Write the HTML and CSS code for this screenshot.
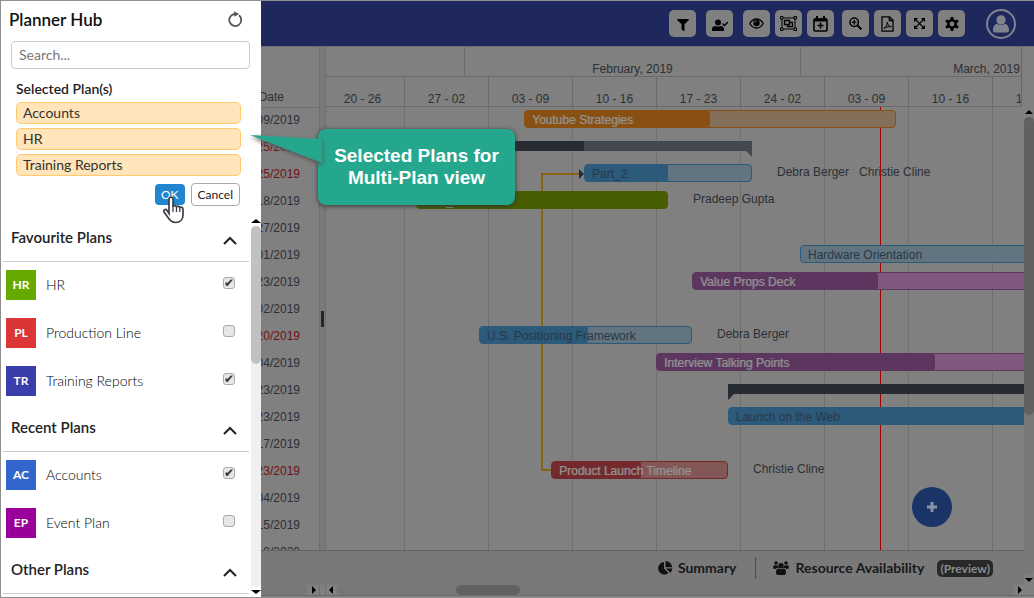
FILE: index.html
```html
<!DOCTYPE html>
<html lang="en">
<head>
<meta charset="utf-8">
<title>Planner Hub</title>
<link rel="stylesheet" href="styles.css">
</head>
<body>
<div class="app">
  <aside class="hub">
    <header class="hub-head">
      <h1 class="hub-title">Planner Hub</h1>
      <button class="icon-btn" type="button" aria-label="Refresh">
        <svg width="16" height="16" viewBox="0 0 16 16" fill="none" stroke="#555" stroke-width="1.800"><path d="M12 4.300A6 6 0 1 1 8.500 3"/><path d="M7 .2 12 3 7.500 5.800z" fill="#555" stroke="none"/></svg>
      </button>
    </header>
    <input class="search" type="search" placeholder="Search..." aria-label="Search plans">
    <section class="selected">
      <h2 class="selected-title">Selected Plan(s)</h2>
      <ul class="chips">
        <li class="chip">Accounts</li>
        <li class="chip">HR</li>
        <li class="chip">Training Reports</li>
      </ul>
      <div class="actions">
        <button class="btn btn-ok" type="button">OK</button>
        <button class="btn btn-cancel" type="button">Cancel</button>
      </div>
    </section>
    <div class="plans-wrap">
      <div class="plans">
        <section>
          <h2 class="group">Favourite Plans <svg width="14" height="9" viewBox="0 0 14 9" fill="none" stroke="#222" stroke-width="2"><path d="M1 8 7 2l6 6"/></svg></h2>
          <label class="plan"><span class="tile tile-hr">HR</span><span class="plan-name">HR</span><input class="tick" type="checkbox" checked></label>
          <label class="plan"><span class="tile tile-pl">PL</span><span class="plan-name">Production Line</span><input class="tick" type="checkbox"></label>
          <label class="plan"><span class="tile tile-tr">TR</span><span class="plan-name">Training Reports</span><input class="tick" type="checkbox" checked></label>
        </section>
        <section>
          <h2 class="group">Recent Plans <svg width="14" height="9" viewBox="0 0 14 9" fill="none" stroke="#222" stroke-width="2"><path d="M1 8 7 2l6 6"/></svg></h2>
          <label class="plan"><span class="tile tile-ac">AC</span><span class="plan-name">Accounts</span><input class="tick" type="checkbox" checked></label>
          <label class="plan"><span class="tile tile-ep">EP</span><span class="plan-name">Event Plan</span><input class="tick" type="checkbox"></label>
        </section>
        <section>
          <h2 class="group">Other Plans <svg width="14" height="9" viewBox="0 0 14 9" fill="none" stroke="#222" stroke-width="2"><path d="M1 8 7 2l6 6"/></svg></h2>
        </section>
      </div>
      <div class="vbar vbar-light">
        <svg class="cap" width="10" height="10" viewBox="0 0 10 10"><path d="M0 7 5 3l5 4z"/></svg>
        <div class="vtrack"><div class="thumb thumb-plans"></div></div>
        <svg class="cap" width="10" height="10" viewBox="0 0 10 10"><path d="M0 3h10L5 7z"/></svg>
      </div>
    </div>
  </aside>

  <main class="main">
    <header class="topbar">
      <div class="tools">
        <button class="tool" type="button" aria-label="Filter"><svg class="drop" width="12" height="12" viewBox="0 0 512 512"><path d="M488 0H24C3 0-8 26 7 41l185 185v206c0 8 4 15 10 20l80 56c16 11 38 0 38-20V226L505 41c15-15 4-41-17-41z"/></svg></button>
        <button class="tool" type="button" aria-label="Assign"><svg class="drop" width="16" height="14" viewBox="0 0 16 14"><circle cx="6" cy="4.500" r="3"/><path d="M0 13v-2c0-2 1.500-3 3.500-3 1.600.8 3.400.8 5 0 2 0 3.500 1 3.500 3v2z"/><path d="M10.500 5.500l2 2L16 4" fill="none" stroke="#000" stroke-width="1.500"/></svg></button>
      </div>
      <div class="tools tools-view">
        <button class="tool" type="button" aria-label="View"><svg width="15" height="11" viewBox="0 0 15 11"><path d="M.8 5.500C2.500 2.500 4.800 1 7.500 1s5 1.500 6.700 4.500C12.500 8.500 10.200 10 7.500 10S2.500 8.500.8 5.500z" fill="none" stroke="#000" stroke-width="1.300"/><circle cx="7.500" cy="5" r="3.200"/><path d="M5.800 4.800c0-1 .7-1.700 1.700-1.700" fill="none" stroke="#808080"/></svg></button>
        <button class="tool" type="button" aria-label="Group"><svg width="17" height="15" viewBox="0 0 17 15" fill="none" stroke="#000"><path d="M2 2h13v11H2z"/><path d="M.5.500h2.500v2.500H.5zM14 .5h2.500V3H14zM.5 12H3v2.500H.5zM14 12h2.500v2.500H14z" fill="#808080"/><path d="M4.500 4.500h5v4h-5zM9.500 6.500h3v4h-5v-2" stroke-width="1.300"/></svg></button>
        <button class="tool" type="button" aria-label="Add to calendar"><svg width="15" height="16" viewBox="0 0 15 16" fill="none" stroke="#000"><rect x="1" y="3" width="13" height="12" rx="1" stroke-width="1.600"/><path d="M1 4h13" stroke-width="3"/><path d="M4 0v3M11 0v3" stroke-width="2"/><path d="M7.500 6.500v6M4.500 9.500h6" stroke-width="1.600"/></svg></button>
      </div>
      <div class="tools tools-page">
        <button class="tool" type="button" aria-label="Zoom in"><svg width="13" height="13" viewBox="0 0 13 13" fill="none" stroke="#000"><circle cx="5.200" cy="5.200" r="4.200" stroke-width="1.500"/><path d="M8.400 8.400l4 4" stroke-width="2"/><path d="M5.200 3v4.400M3 5.200h4.400" stroke-width="1.300"/></svg></button>
        <button class="tool" type="button" aria-label="Export PDF"><svg width="13" height="16" viewBox="0 0 13 16" fill="none" stroke="#000" stroke-width="1.300"><path d="M1 .8h7.500L12 4.300v10.900H1z"/><path d="M8.300.8v3.700H12"/><path d="M3 12.500c2-1 3.300-3.500 3.300-6.500.2 2.500 1.500 4.500 4 4.800-2.600-.5-5 0-7.300 1.700z" stroke-width="1"/></svg></button>
        <button class="tool" type="button" aria-label="Full screen"><svg width="11" height="11" viewBox="0 0 12 12"><path d="M1.500 1.500l9 9M10.500 1.500l-9 9" stroke="#000" stroke-width="1.500"/><path d="M0 0h4.500L0 4.500zM12 0v4.500L7.500 0zM0 12V7.500L4.500 12zM12 12H7.500L12 7.500z"/></svg></button>
        <button class="tool" type="button" aria-label="Settings"><svg width="14" height="14" viewBox="0 0 14 14"><circle cx="7" cy="7" r="3.700" fill="none" stroke="#000" stroke-width="2.600"/><path d="M7 0v3M7 11v3M1 3.500l2.500 1.500M10.500 9l2.500 1.500M1 10.500 3.500 9M10.500 5 13 3.500" stroke="#000" stroke-width="2.800"/></svg></button>
      </div>
      <button class="avatar" type="button" aria-label="Account"><svg width="18" height="18" viewBox="0 0 18 18" fill="#80838f"><circle cx="9" cy="5" r="4.700"/><path d="M1 15.500C1 12 2.500 9 5 8.700c2.300 1.700 5.700 1.700 8 0 2.500.3 4 3.300 4 6.800 0 1.300-.8 2-2 2H3c-1.200 0-2-.7-2-2z"/></svg></button>
    </header>

    <div class="board">
      <div class="work">
        <div class="panes">
          <div class="dates">
            <table class="date-table">
              <thead><tr><th>End Date</th></tr></thead>
              <tbody>
                <tr><td>05/09/2019</td></tr>
                <tr><td class="late">02/25/2019</td></tr>
                <tr><td class="late">02/25/2019</td></tr>
                <tr><td>02/18/2019</td></tr>
                <tr><td>03/27/2019</td></tr>
                <tr><td>04/01/2019</td></tr>
                <tr><td>03/23/2019</td></tr>
                <tr><td>04/02/2019</td></tr>
                <tr><td class="late">02/20/2019</td></tr>
                <tr><td>04/04/2019</td></tr>
                <tr><td>04/23/2019</td></tr>
                <tr><td>04/23/2019</td></tr>
                <tr><td>04/17/2019</td></tr>
                <tr><td class="late">02/23/2019</td></tr>
                <tr><td>04/04/2019</td></tr>
                <tr><td>04/15/2019</td></tr>
                <tr><td>04/10/2020</td></tr>
              </tbody>
            </table>
          </div>
          <div class="splitter"><span class="grip"></span></div>
          <div class="timeline">
            <div class="scale">
              <div class="months">
                <span class="month" style="--days:12"></span>
                <span class="month" style="--days:28">February, 2019</span>
                <span class="month" style="--days:31">March, 2019</span>
              </div>
              <div class="weeks">
                <span class="week">20 - 26</span><span class="week">27 - 02</span><span class="week">03 - 09</span><span class="week">10 - 16</span><span class="week">17 - 23</span><span class="week">24 - 02</span><span class="week">03 - 09</span><span class="week">10 - 16</span><span class="week">17 - 23</span>
              </div>
            </div>
            <div class="chart">
              <div class="canvas">
                <div class="today"></div>
                <svg class="links" width="270" height="380" viewBox="0 0 270 380"><path d="M259 67h-37v296h10" fill="none" stroke="#866614" stroke-width="2"/><path d="M259 62v10l5-5z" fill="#272c33"/></svg>
                <div class="row"><div class="bar orange" style="--start:17;--days:31"><i class="done" style="width:50%"></i><span class="label">Youtube Strategies</span></div></div>
                <div class="row"><div class="phase phase-end" style="--start:8;--days:28"><i class="phase-done" style="width:50%"></i></div></div>
                <div class="row"><div class="bar blue" style="--start:22;--days:14"><i class="done" style="width:50%"></i><span class="label">Part_2</span></div><span class="who">Debra Berger</span><span class="who who-next">Christie Cline</span></div>
                <div class="row"><div class="bar green" style="--start:8;--days:21"><i class="done" style="width:100%"></i><span class="label">Part_3</span></div><span class="who">Pradeep Gupta</span></div>
                <div class="row"></div>
                <div class="row"><div class="bar blue" style="--start:40;--days:29"><span class="label">Hardware Orientation</span></div></div>
                <div class="row"><div class="bar purple" style="--start:31;--days:31"><i class="done" style="width:50%"></i><span class="label">Value Props Deck</span></div></div>
                <div class="row"></div>
                <div class="row"><div class="bar blue" style="--start:13.250;--days:17.750"><i class="done" style="width:51%"></i><span class="label">U.S. Positioning Framework</span></div><span class="who">Debra Berger</span></div>
                <div class="row"><div class="bar purple" style="--start:28;--days:42"><i class="done" style="width:55.300%"></i><span class="label">Interview Talking Points</span></div></div>
                <div class="row"><div class="phase phase-start" style="--start:34;--days:58"><i class="phase-done" style="width:100%"></i></div></div>
                <div class="row"><div class="bar blue" style="--start:34;--days:58"><i class="done" style="width:100%"></i><span class="label">Launch on the Web</span></div></div>
                <div class="row"></div>
                <div class="row"><div class="bar red" style="--start:19.250;--days:14.750"><i class="done" style="width:51%"></i><span class="label">Product Launch Timeline</span></div><span class="who">Christie Cline</span></div>
              </div>
              <button class="fab" type="button" aria-label="Add task"><svg width="12" height="12" viewBox="0 0 12 12"><path d="M6 1v10M1 6h10" stroke="#8b93a3" stroke-width="3"/></svg></button>
            </div>
          </div>
        </div>
        <footer class="footer">
          <a class="foot-link" href="#summary"><svg width="15" height="14" viewBox="0 0 15 14" fill="#111"><path d="M6 1v6.500l4.500 4.600A6.300 6.300 0 1 1 6 1z"/><path d="M7.500 0A6.500 6.500 0 0 1 14 6.200H7.500z"/><path d="M8 7.500h6.300a6 6 0 0 1-2 4.200z"/></svg>Summary</a>
          <a class="foot-link foot-res" href="#resources"><svg width="16" height="14" viewBox="0 0 16 14" fill="#111"><circle cx="8" cy="4.700" r="2.700"/><circle cx="3" cy="2" r="1.800"/><circle cx="13" cy="2" r="1.800"/><path d="M0 7.500C0 5 .8 4 2 4c1 .6 1.700.6 2.700.3.100 1 .6 2 1.300 2.700H3.500L2.800 8zM16 7.500C16 5 15.200 4 14 4c-1 .6-1.700.6-2.700.3-.1 1-.6 2-1.300 2.700h2.500l.7 1z"/><path d="M3 12c0-3 .8-4.400 2.500-4.400 1.600 1 3.400 1 5 0C12.200 7.600 13 9 13 12c0 1.200-.8 2-2 2H5c-1.200 0-2-.8-2-2z"/></svg>Resource Availability <span class="badge">(Preview)</span></a>
        </footer>
      </div>
      <div class="vbar vbar-dim">
        <svg class="cap" width="10" height="10" viewBox="0 0 10 10"><path d="M1 7l4-4 4 4z"/></svg>
        <div class="vtrack"><div class="thumb thumb-chart"></div></div>
        <svg class="cap" width="10" height="10" viewBox="0 0 10 10"><path d="M1 3h8L5 7z"/></svg>
      </div>
    </div>
    <div class="hbars">
      <div class="hbar hbar-dates"><div class="htrack"></div><svg class="cap" width="10" height="10" viewBox="0 0 10 10"><path d="M4 1v8l4-4z"/></svg></div>
      <div class="hsplit"></div>
      <div class="hbar"><svg class="cap" width="10" height="10" viewBox="0 0 10 10"><path d="M7 1v8L3 5z"/></svg><div class="htrack"><div class="thumb thumb-weeks"></div></div><svg class="cap" width="10" height="10" viewBox="0 0 10 10"><path d="M3 1v8l4-4z"/></svg></div>
    </div>
  </main>

  <div class="callout">
    <svg class="tail" width="72" height="32" viewBox="0 0 72 32"><path d="M0 0 72 4v24z" fill="#24a78d"/></svg>
    Selected Plans for<br>Multi-Plan view
  </div>
  <svg class="pointer" width="23" height="28" viewBox="0 0 23 28"><path d="M7 17.500V3.500C7 .5 11 .5 11 3.500V11c0-2 3.500-2 3.500.5 0-2 3.300-1.800 3.300.8 0-2 3.200-1.500 3.200 1V19c0 4-2.500 7.500-7.500 7.500-4 0-5.500-2-7.500-5L2 16c-1-2 1.500-3.500 3-1.800z" fill="#fff" stroke="#3b3f4a" stroke-width="1.700"/><path d="M11 10v6M14.500 11v5M17.800 12v4" stroke="#3b3f4a" stroke-width="1.300"/></svg>
</div>
</body>
</html>
```
FILE: styles.css
```css
* { box-sizing: border-box; }

body {
  margin: 0;
  font-family: "Liberation Sans", Arial, sans-serif;
  font-size: 12px;
  color: #2c2f35;
}

h1, h2 { margin: 0; font-weight: 600; }
ul { margin: 0; padding: 0; list-style: none; }
button { margin: 0; padding: 0; border: 0; font: inherit; }
svg { display: block; flex: none; }

.app {
  position: relative;
  display: flex;
  height: 100vh;
  overflow: hidden;
  border: 1px solid #8f8f8f;
  border-width: 1px 0 1px 1px;
}

/* Plan picker */
.hub {
  display: flex;
  flex: none;
  flex-direction: column;
  width: 260px;
  background: #fff;
  color: #222;
  font-family: Lato, sans-serif;
  font-size: 14px;
}

.hub-head {
  display: flex;
  align-items: center;
  justify-content: space-between;
  height: 36px;
  padding: 0 18px 0 8px;
}

.hub-title { font-size: 17px; color: #111; }
.icon-btn { background: none; }

.search {
  height: 28px;
  margin: 4px 11px 0 10px;
  padding: 0 7px 2px;
  border: 1px solid #ccc;
  border-radius: 4px;
  font: inherit;
}

.search::placeholder { color: #777; }

.selected { padding: 11px 20px 10px 15px; }
.selected-title { font-size: 14px; line-height: 18px; }
.chips { display: grid; gap: 4px; margin-top: 4px; }

.chip {
  height: 22px;
  padding: 0 6px;
  border: 1px solid #ffca6e;
  border-radius: 5px;
  background: #ffe5b9;
  color: #333;
  line-height: 20px;
}

.actions {
  display: flex;
  align-items: center;
  justify-content: flex-end;
  gap: 6px;
  margin: 7px 1px 0 0;
}

.btn { height: 23px; padding: 0 6px; border-radius: 4px; font-size: 12px; }
.btn-ok { height: 21px; background: #2185d0; color: #fff; }
.btn-cancel { border: 1px solid #aaa; background: #fff; color: #222; }

.plans-wrap { display: flex; flex: 1; min-height: 0; }
.plans { flex: 1; overflow: hidden; padding: 0 2px; }

.group {
  display: flex;
  align-items: center;
  justify-content: space-between;
  height: 46px;
  padding: 0 12px 4px 8px;
  border-bottom: 1px solid #ccc;
  font-size: 15px;
}

.group svg { margin-top: 8px; }

.plan {
  display: flex;
  align-items: center;
  height: 48px;
  padding: 0 14px 2px 3px;
}

.tile {
  width: 30px;
  margin-right: 10px;
  color: #fff;
  font-size: 12px;
  font-weight: 700;
  line-height: 30px;
  text-align: center;
}

.tile-hr { background: #6a0; }
.tile-pl { background: #dc3535; }
.tile-tr { background: #3a3dac; }
.tile-ac { background: #36c; }
.tile-ep { background: #909; }
.plan-name { flex: 1; margin-bottom: 2px; color: #000; font-weight: 300; }

.tick {
  display: grid;
  place-items: center;
  width: 12px;
  height: 12px;
  margin: 0 0 4px;
  appearance: none;
  border: 1px solid #aaa;
  border-radius: 3px;
  background: #e6e6e6;
}

.tick:checked::before {
  content: "✔";
  color: #333;
  font: 12px/10px "DejaVu Sans", sans-serif;
}

/* Scroll bars */
.vbar { display: flex; flex: none; flex-direction: column; width: 10px; }
.vtrack { flex: 1; border-radius: 5px; }
.thumb { border-radius: 5px; }
.vbar-light .vtrack { background: #f0f0f0; }
.thumb-plans { height: 138px; background: #c1c1c1; }
.vbar-dim { padding-top: 60px; }
.vbar-dim .vtrack { background: #787878; }
.thumb-chart { height: 65%; background: #616161; }

.hbars { display: flex; flex: none; height: 11px; border-bottom: 1px solid #6c6c6c; }
.hbar { display: flex; flex: 1; padding-right: 9px; }
.htrack { flex: 1; border-radius: 5px; background: #777; }
.hbar-dates { flex: none; width: 58px; padding-right: 1px; }
.hsplit { width: 7px; border: 1px solid #6e6e6e; border-width: 0 1px; }
.thumb-weeks { width: 64px; height: 10px; margin-left: 120px; background: #616161; }

/* Dimmed planner behind the picker */
.main {
  display: flex;
  flex: 1;
  flex-direction: column;
  min-width: 0;
  padding-bottom: 1px;
  background: #808080;
}

.topbar {
  display: flex;
  flex: none;
  align-items: center;
  justify-content: flex-end;
  height: 46px;
  padding: 0 18px 0 0;
  border-bottom: 1px solid #707070;
  background: #1f285c;
}

.tools { display: flex; gap: 10px; }
.tools-view { gap: 5px; margin-left: 10px; }
.tools-page { gap: 5px; margin-left: 8px; }

.tool {
  display: grid;
  place-items: center;
  width: 27px;
  height: 27px;
  border-radius: 5px;
  background: #808080;
}

.drop { margin-top: 3px; }

.avatar {
  display: grid;
  place-items: center;
  width: 30px;
  height: 30px;
  margin-left: 21px;
  border: 2px solid #80838f;
  border-radius: 50%;
  background: none;
}

.board { display: flex; flex: 1; min-height: 0; }
.work { display: flex; flex: 1; flex-direction: column; min-width: 0; }
.panes { display: flex; flex: 1; min-height: 0; overflow: hidden; }

.dates {
  display: flex;
  flex: none;
  justify-content: flex-end;
  width: 58px;
  overflow: hidden;
}

.date-table { flex: none; width: 110px; height: 0; border-collapse: collapse; }
.date-table th { height: 60px; padding: 0 35px 3px 0; border-bottom: 1px solid #6e6e6e; font-weight: 400; text-align: right; vertical-align: bottom; }
.date-table td { height: 27px; padding: 0 19px 2px 0; text-align: right; }
.date-table .late { color: #6c1414; }

.splitter {
  display: grid;
  flex: none;
  place-items: center;
  width: 7px;
  border: 1px solid #6e6e6e;
  border-width: 0 1px;
  background: #797979;
}

.grip { width: 3px; height: 16px; margin-top: 40px; background: #23262f; }

.timeline { display: flex; flex: 1; flex-direction: column; min-width: 0; }
.scale { flex: none; margin-right: 2px; overflow: hidden; border-right: 1px solid #666; }
.months, .weeks { display: flex; height: 30px; border-bottom: 1px solid #6a6a6a; }

.month, .week {
  flex: none;
  width: 84px;
  border-left: 1px solid #6a6a6a;
  line-height: 44px;
  text-align: center;
}

.month { width: calc(var(--days) * 12px); }
.month:first-child, .week:first-child { margin-left: -6px; }

.chart { position: relative; flex: 1; min-height: 0; overflow: hidden; }

.canvas {
  position: relative;
  height: 100%;
  margin-left: -6px;
  background: repeating-linear-gradient(to right, #707070 0 1px, transparent 1px 84px);
}

.today { position: absolute; top: 0; bottom: 0; left: 560px; width: 1px; background: #a00000; }
.links { position: absolute; top: 0; left: 0; }

.row { display: flex; align-items: center; height: 27px; padding-bottom: 3px; }

.bar {
  position: relative;
  flex: none;
  width: calc(var(--days) * 12px);
  height: 18px;
  margin-left: calc(var(--start) * 12px);
  border: 1px solid var(--deep);
  border-radius: 4px;
  background: var(--pale);
  color: #949494;
  text-shadow: 1px 0 0 #8c8c8c88;
}

.done { position: absolute; top: 0; bottom: 0; left: 0; border-radius: 2px; background: var(--deep); }
.label { position: relative; display: block; padding: 0 7px; line-height: 18px; white-space: nowrap; }
.orange { --deep: #8a5012; --pale: #84705a; }
.blue { --deep: #2b5a7a; --pale: #61747f; color: #2a3846; text-shadow: none; }
.green { --deep: #475e00; --pale: #475e00; }
.purple { --deep: #5c365f; --pale: #80597e; }
.red { --deep: #742a2c; --pale: #845757; }

.phase {
  position: relative;
  flex: none;
  width: calc(var(--days) * 12px);
  height: 10px;
  margin-left: calc(var(--start) * 12px);
  background: #444851;
}

.phase-done { display: block; height: 10px; background: #272c33; }
.phase::after { content: ""; position: absolute; top: 10px; border-top: 6px solid #444851; }
.phase-end::after { right: 0; border-left: 6px solid transparent; }
.phase-start::after { left: 0; border-top-color: #272c33; border-right: 6px solid transparent; }

.who { margin: 0 0 2px 25px; white-space: nowrap; }
.who-next { margin-left: 10px; }

.fab {
  position: absolute;
  right: 72px;
  bottom: 23px;
  display: grid;
  place-items: center;
  width: 40px;
  height: 40px;
  border-radius: 50%;
  background: #1b3468;
}

.footer {
  display: flex;
  flex: none;
  align-items: center;
  justify-content: flex-end;
  height: 35px;
  padding-right: 31px;
  border-top: 1px solid #626262;
  background: #797979;
}

.foot-link {
  display: flex;
  align-items: center;
  gap: 5px;
  color: #17181a;
  font: 700 14px/22px Lato, sans-serif;
  text-decoration: none;
}

.foot-res { gap: 7px; margin-left: 18px; padding-left: 17px; border-left: 1px solid #4c4c4c; }
.badge { margin-left: 6px; padding: 0 3px; border-radius: 5px; background: #262928; color: #8c8c8c; font-size: 12px; line-height: 17px; }

/* Annotation */
.callout {
  position: absolute;
  top: 128px;
  left: 317px;
  width: 197px;
  padding: 16px 0;
  border-radius: 8px;
  background: #24a78d;
  box-shadow: 0 1px 5px #333;
  color: #fff;
  font-size: 19px;
  font-weight: 700;
  line-height: 22px;
  text-align: center;
  white-space: nowrap;
}

.tail { position: absolute; top: 6px; left: -68px; filter: drop-shadow(0 2px 2px #555); }
.pointer { position: absolute; top: 195px; left: 161px; }
```
